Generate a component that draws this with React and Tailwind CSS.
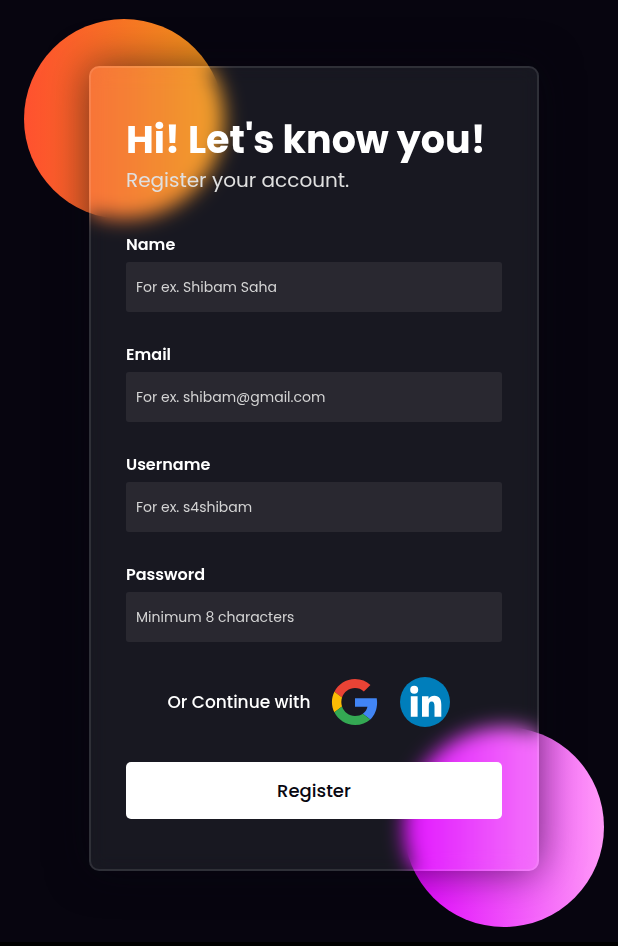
const fields = [
  { id: "name", label: "Name", type: "text", placeholder: "For ex. Shibam Saha" },
  { id: "email", label: "Email", type: "email", placeholder: "For ex. shibam@gmail.com" },
  { id: "username", label: "Username", type: "text", placeholder: "For ex. s4shibam" },
  { id: "password", label: "Password", type: "password", placeholder: "Minimum 8 characters" },
];

function Field({ id, label, type, placeholder }) {
  return (
    <div className="flex flex-col gap-1">
      <label htmlFor={id} className="text-base leading-[26px] font-semibold">
        {label}
      </label>
      <input
        id={id}
        type={type}
        placeholder={placeholder}
        className="h-[50px] w-full rounded-[3px] bg-white/7 px-2.5 text-sm text-white outline-none placeholder:text-[#d4d4d4]"
      />
    </div>
  );
}

function GoogleIcon() {
  return (
    <svg viewBox="-2 -2 52 52" className="size-[50px]" aria-hidden="true">
      <path fill="#EA4335" d="M24 9.5c3.54 0 6.71 1.22 9.21 3.6l6.85-6.85C35.9 2.38 30.47 0 24 0 14.62 0 6.51 5.38 2.56 13.22l7.98 6.19C12.43 13.72 17.74 9.5 24 9.5z" />
      <path fill="#4285F4" d="M46.98 24.55c0-1.57-.15-3.09-.38-4.55H24v9.02h12.94c-.58 2.96-2.26 5.48-4.78 7.18l7.73 6c4.51-4.18 7.09-10.36 7.09-17.65z" />
      <path fill="#FBBC05" d="M10.53 28.59c-.48-1.45-.76-2.99-.76-4.59s.27-3.14.76-4.59l-7.98-6.19C.92 16.46 0 20.12 0 24c0 3.88.92 7.54 2.56 10.78l7.97-6.19z" />
      <path fill="#34A853" d="M24 48c6.48 0 11.93-2.13 15.89-5.81l-7.73-6c-2.15 1.45-4.92 2.3-8.16 2.3-6.26 0-11.57-4.22-13.47-9.91l-7.98 6.19C6.51 42.62 14.62 48 24 48z" />
    </svg>
  );
}

function LinkedInIcon() {
  return (
    <svg viewBox="0 0 50 50" className="size-[50px]" aria-hidden="true">
      <circle cx="25" cy="25" r="25" fill="#007EBB" />
      <g fill="#fff">
        <circle cx="14.2" cy="12.8" r="4" />
        <path d="M10.8 19.2h6.8V39.8h-6.8zM22 19.2h6.5v2.8c1.3-2 3.3-3.2 5.9-3.2 5.2 0 6.9 3.5 6.9 9v12h-6.8V29.5c0-3-.6-5-2.8-5-2.3 0-2.9 2-2.9 4.8v10.5H22z" />
      </g>
    </svg>
  );
}

export default function App() {
  return (
    <div className="flex min-h-screen flex-col bg-black font-['Poppins','Inter',sans-serif]">
      <main className="flex flex-1 justify-center overflow-hidden bg-[#07050f] pt-[66px] pb-[71px] pl-2.5 text-white">
        <div className="relative w-full max-w-[450px]">
          <div className="absolute -top-[47px] -left-[65px] size-[200px] rounded-full bg-linear-to-r/srgb from-[#ff512f] to-[#f09819]" />
          <div className="absolute -right-[65px] -bottom-14 size-[200px] rounded-full bg-linear-to-r/srgb from-[#e100ff] to-[#ff99f8]" />
          <form
            onSubmit={(event) => event.preventDefault()}
            className="relative rounded-[10px] border-2 border-white/10 bg-[#e4ffff]/8 px-[35px] py-[50px] shadow-[0_0_40px_rgba(8,7,16,0.6)] backdrop-blur-[10px]"
          >
            <h1 className="text-[38px] leading-[44px] font-bold whitespace-nowrap">Hi! Let's know you!</h1>
            <p className="pt-1 text-xl leading-[28px] text-[#e0e0e0]">Register your account.</p>
            <div className="flex flex-col gap-[30px] pt-[38px]">
              {fields.map((field) => (
                <Field key={field.id} {...field} />
              ))}
            </div>
            <div className="flex items-center justify-center pt-[35px] pr-2.5">
              <span className="pr-5 text-[17px] leading-6 font-medium">Or Continue with</span>
              <div className="flex gap-5">
                <button type="button" aria-label="Google">
                  <GoogleIcon />
                </button>
                <button type="button" aria-label="LinkedIn">
                  <LinkedInIcon />
                </button>
              </div>
            </div>
            <button type="submit" className="mt-[35px] h-[57px] w-full rounded-[5px] bg-white text-lg font-medium text-[#080710]">
              Register
            </button>
          </form>
        </div>
      </main>
      <div className="h-1" />
    </div>
  );
}
